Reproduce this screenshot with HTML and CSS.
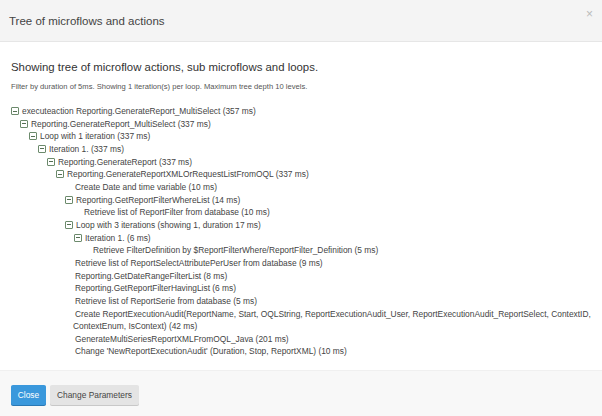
FILE: index.html
```html
<!DOCTYPE html>
<html>
<head>
<meta charset="utf-8">
<link rel="stylesheet" href="styles.css">
</head>
<body>
<div class="dialog">
  <div class="header">
    <div class="title">Tree of microflows and actions</div>
    <div class="close">×</div>
  </div>
  <div class="body">
    <div class="heading">Showing tree of microflow actions, sub microflows and loops.</div>
    <div class="info">Filter by duration of 5ms. Showing 1 iteration(s) per loop. Maximum tree depth 10 levels.</div>
    <ul class="tree">
      <li class="node l0"><span class="tg"></span>executeaction Reporting.GenerateReport_MultiSelect (357 ms)</li>
      <li class="node l1"><span class="tg"></span>Reporting.GenerateReport_MultiSelect (337 ms)</li>
      <li class="node l2"><span class="tg"></span>Loop with 1 iteration (337 ms)</li>
      <li class="node l3"><span class="tg"></span>Iteration 1. (337 ms)</li>
      <li class="node l4"><span class="tg"></span>Reporting.GenerateReport (337 ms)</li>
      <li class="node l5"><span class="tg"></span>Reporting.GenerateReportXMLOrRequestListFromOQL (337 ms)</li>
      <li class="leaf l6">Create Date and time variable (10 ms)</li>
      <li class="node l6"><span class="tg"></span>Reporting.GetReportFilterWhereList (14 ms)</li>
      <li class="leaf l7">Retrieve list of ReportFilter from database (10 ms)</li>
      <li class="node l6"><span class="tg"></span>Loop with 3 iterations (showing 1, duration 17 ms)</li>
      <li class="node l7"><span class="tg"></span>Iteration 1. (6 ms)</li>
      <li class="leaf l8">Retrieve FilterDefinition by $ReportFilterWhere/ReportFilter_Definition (5 ms)</li>
      <li class="leaf l6">Retrieve list of ReportSelectAttributePerUser from database (9 ms)</li>
      <li class="leaf l6">Reporting.GetDateRangeFilterList (8 ms)</li>
      <li class="leaf l6">Reporting.GetReportFilterHavingList (6 ms)</li>
      <li class="leaf l6">Retrieve list of ReportSerie from database (5 ms)</li>
      <li class="leaf l6 wrap">Create ReportExecutionAudit(ReportName, Start, OQLString, ReportExecutionAudit_User, ReportExecutionAudit_ReportSelect, ContextID, ContextEnum, IsContext) (42 ms)</li>
      <li class="leaf l6">GenerateMultiSeriesReportXMLFromOQL_Java (201 ms)</li>
      <li class="leaf l6">Change 'NewReportExecutionAudit' (Duration, Stop, ReportXML) (10 ms)</li>
    </ul>
  </div>
  <div class="footer">
    <button class="btn primary">Close</button>
    <button class="btn">Change Parameters</button>
  </div>
</div>
</body>
</html>
```

FILE: styles.css
```css
html, body {
  margin: 0;
  padding: 0;
  background: #fff;
}
body {
  font-family: "Liberation Sans", Arial, sans-serif;
  color: #333;
}
.dialog {
  width: 602px;
  height: 416px;
  display: flex;
  flex-direction: column;
}
.header {
  height: 42px;
  background: #f4f4f4;
  border-bottom: 1px solid #e6e6e6;
  display: flex;
  align-items: center;
  justify-content: space-between;
  padding: 0 9px 0 9px;
  box-sizing: border-box;
  flex: none;
}
.title {
  font-size: 11.5px;
  color: #444;
}
.close {
  font-size: 12px;
  color: #bbb;
  margin-top: -14px;
}
.body {
  flex: 1;
  padding: 18px 8px 0 11px;
}
.heading {
  font-size: 11.4px;
  color: #333;
  line-height: 15px;
}
.info {
  font-size: 7.6px;
  color: #555;
  margin-top: 7px;
  line-height: 10px;
}
.tree {
  list-style: none;
  margin: 13px 0 0 0;
  padding: 0;
  font-size: 8.4px;
  color: #444;
  line-height: 12.65px;
}
.tree li {
  display: block;
  white-space: nowrap;
}
.tree li.wrap {
  white-space: normal;
}
.tg {
  display: inline-block;
  width: 6px;
  height: 6px;
  border: 1px solid #6c8a6c;
  border-radius: 1px;
  margin-right: 3px;
  vertical-align: -1px;
  position: relative;
  background: #fff;
}
.tg::after {
  content: "";
  position: absolute;
  left: 1px;
  right: 1px;
  top: 2.5px;
  height: 1px;
  background: #557055;
}
.l0 { padding-left: 0; }
.l1 { padding-left: 9px; }
.l2 { padding-left: 18px; }
.l3 { padding-left: 27px; }
.l4 { padding-left: 36px; }
.l5 { padding-left: 45px; }
.l6.node { padding-left: 54px; }
.l6.leaf { padding-left: 64px; }
.l7.node { padding-left: 63px; }
.l7.leaf { padding-left: 73px; }
.l8.leaf { padding-left: 82px; }
.l6.wrap { padding-left: 62px; text-indent: 2px; }
.footer {
  height: 46px;
  background: #f8f8f8;
  border-top: 1px solid #f0f0f0;
  display: flex;
  align-items: center;
  gap: 4px;
  padding: 0 11px;
  box-sizing: border-box;
  flex: none;
}
.btn {
  font-family: "Liberation Sans", Arial, sans-serif;
  font-size: 8.4px;
  height: 20px;
  padding: 0 7px;
  border: none;
  border-radius: 2px;
  background: #e4e4e4;
  color: #444;
  box-shadow: 0 1px 0 #c8c8c8;
  margin-top: 2px;
}
.btn.primary {
  background: #3a98dc;
  color: #fff;
  box-shadow: 0 1px 0 #2a78b4;
  width: 35px;
  padding: 0;
}
```
